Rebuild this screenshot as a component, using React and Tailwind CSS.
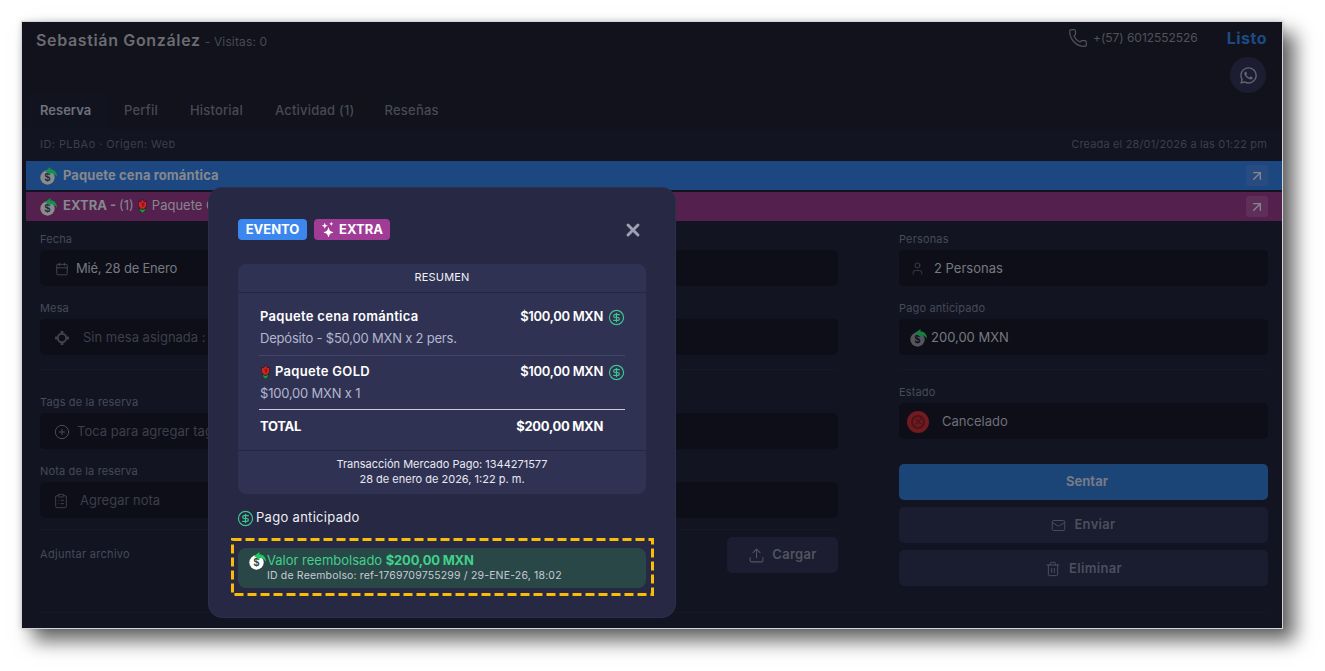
import React from 'react';
import {
  ArrowUpRight,
  Calendar,
  CircleDollarSign,
  CirclePlus,
  ClipboardList,
  Mail,
  Phone,
  Trash2,
  Upload,
  User,
  X,
} from 'lucide-react';
import { FaWhatsapp } from 'react-icons/fa';
import { BsStars } from 'react-icons/bs';

const font = 'font-["Inter","Open_Sans",sans-serif]';

function RefundIcon({ coin = '#8b8b8b', mark = '#1f2a44', arrow = '#12924f', className = '' }) {
  return (
    <svg viewBox="0 0 17 18" className={`w-[17px] h-[18px] shrink-0 ${className}`}>
      <circle cx="7.5" cy="10.5" r="7.2" fill={coin} />
      <text x="7.5" y="14.2" textAnchor="middle" fontSize="10.5" fontWeight="800" fill={mark} fontFamily="Liberation Sans, sans-serif">$</text>
      <path d="M5 4 10.5 0v2.4c4 0 6.5 2.6 6.5 7.6-1.5-2.7-3.5-4-6.5-4v2z" fill={arrow} />
    </svg>
  );
}

function Rose({ className = '' }) {
  return (
    <svg viewBox="0 0 9 14" className={`w-[9px] h-[14px] shrink-0 ${className}`}>
      <path d="M1 9 4.5 10.6 8 9 6.8 12.2 4.5 14 2.2 12.2z" fill="#1f9d3a" stroke="#10131c" strokeWidth="0.5" />
      <path d="M.5 2.2 2.7 2.9 4.5 0 6.3 2.9 8.5 2.2 8.5 6.8 6.3 10H2.7L.5 6.8z" fill="#d32424" stroke="#10131c" strokeWidth="0.5" />
      <path d="M3.4 4 5.6 3.4 6.6 6 4.5 8.4z" fill="#8f1616" />
    </svg>
  );
}

function TableIcon() {
  return (
    <svg viewBox="0 0 14 14" className="w-[14px] h-[14px] shrink-0" fill="none">
      <circle cx="7" cy="7" r="4.2" stroke="#3f4250" strokeWidth="2" />
      <rect x="5.6" y="0" width="2.8" height="2" fill="#3f4250" />
      <rect x="5.6" y="12" width="2.8" height="2" fill="#3f4250" />
      <rect x="0" y="5.6" width="2" height="2.8" fill="#3f4250" />
      <rect x="12" y="5.6" width="2" height="2.8" fill="#3f4250" />
    </svg>
  );
}

function CancelIcon() {
  return (
    <div className="w-[22px] h-[22px] rounded-full bg-[#731a20] flex items-center justify-center shrink-0">
      <div className="w-[14px] h-[14px] rounded-full border-2 border-[#4a1418] flex items-center justify-center">
        <X className="w-[9px] h-[9px] text-[#4a1418]" strokeWidth={4} />
      </div>
    </div>
  );
}

function Field({ label, children, className = '' }) {
  return (
    <div className={className}>
      <div className="h-[20px] text-[11px] leading-[19px] tracking-[0.15px] text-[#464a5a]">{label}</div>
      <div className="h-[36px] pt-[1px] rounded-[5px] bg-[#0d0e17] flex items-center text-[13px]">{children}</div>
    </div>
  );
}

function Tab({ children, active, className = '' }) {
  return (
    <div
      className={`h-[36px] flex items-center rounded-t-[6px] text-[13px] ${
        active ? 'w-[83px] pl-[14px] bg-[#11141f] text-[#6e717c] font-semibold' : 'font-medium tracking-[0.2px] text-[#474a55]'
      } ${className}`}
    >
      {children}
    </div>
  );
}

function SummaryLine({ name, detail, rose }) {
  return (
    <div>
      <div className="flex items-center justify-between h-[20px]">
        <div className="flex items-center gap-[5px] text-[13px] font-semibold tracking-[0.3px] text-white">
          {rose && <Rose className="ml-[1px]" />}
          {name}
        </div>
        <div className="flex items-center gap-[5px] text-[13px] font-semibold tracking-[-0.3px] text-white">
          $100,00 MXN
          <CircleDollarSign className="w-[17px] h-[17px] text-[#3fc48f]" strokeWidth={1.7} />
        </div>
      </div>
      <div className="text-[13px] leading-[20px] tracking-[-0.2px] text-[#b3b7cf] mt-[1px]">{detail}</div>
    </div>
  );
}

function Modal() {
  return (
    <div className="absolute left-[186px] top-[165px] w-[468px] h-[431px] rounded-[14px] bg-[#272843] border border-[#2d2e4a] pt-[31px] px-[29px]">
      <div className="flex items-center h-[21px]">
        <span className="w-[69px] h-[21px] rounded-[4px] bg-[#3b87ee] text-white text-[13px] font-bold flex items-center justify-center">EVENTO</span>
        <span className="ml-[7px] w-[76px] h-[21px] gap-[3px] rounded-[4px] bg-[#a03c95] text-white text-[13px] font-bold flex items-center justify-center">
          <BsStars className="w-[15px] h-[15px]" />
          EXTRA
        </span>
        <X className="ml-auto mr-[3px] w-[20px] h-[20px] text-[#9ea1b3]" strokeWidth={3.5} />
      </div>

      <div className="mt-[24px] w-[408px] h-[230px] rounded-[8px] bg-[#303253] flex flex-col">
        <div className="h-[29px] shrink-0 pb-[1px] border-b border-[#25263f] flex items-center justify-center text-[11px] tracking-[0.2px] text-[#f1f1f6]">RESUMEN</div>
        <div className="pl-[22px] pr-[21px] pt-[14px]">
          <SummaryLine name="Paquete cena romántica" detail="Depósito - $50,00 MXN x 2 pers." />
          <div className="-ml-[1px] mt-[7px] h-px bg-[#43456a]" />
          <div className="mt-[6px] -mb-[1px]">
            <SummaryLine rose name="Paquete GOLD" detail="$100,00 MXN x 1" />
          </div>
          <div className="-ml-[1px] mt-[7px] h-px bg-[#c9cbdc]" />
          <div className="flex justify-between pr-[22px] pt-[1px] h-[32px] items-center text-[13px] font-bold tracking-[-0.3px] text-white">
            <span>TOTAL</span>
            <span>$200,00 MXN</span>
          </div>
        </div>
        <div className="mt-[8px] flex-1 pb-[2px] border-t border-[#25263f] flex flex-col items-center justify-center text-[11px] leading-[15px] text-[#e8e9f2]">
          <div>Transacción Mercado Pago: 1344271577</div>
          <div>28 de enero de 2026, 1:22 p. m.</div>
        </div>
      </div>

      <div className="mt-[14px] flex items-center gap-[2px] text-[13px] tracking-[0.3px] text-[#eeeef5] h-[20px]">
        <CircleDollarSign className="-ml-[1px] w-[17px] h-[17px] text-[#3fc48f]" strokeWidth={1.7} />
        Pago anticipado
      </div>

      <div className="relative -ml-[7px] mt-[10px] w-[423px] h-[58px] pl-[7px] pr-[8px] pt-[10px]">
        <div className="h-[40px] rounded-[8px] bg-[#2a4747] flex items-center pl-[11px] gap-[1px]">
          <RefundIcon coin="#ffffff" mark="#2a4747" arrow="#22c55e" className="self-start mt-[4px]" />
          <div>
            <div className="text-[13px] leading-[15px] text-[#3fd08c]">
              Valor reembolsado <span className="font-bold tracking-[-0.2px]">$200,00 MXN</span>
            </div>
            <div className="text-[10.5px] leading-[16px] tracking-[0.17px] text-[#c3cdd3]">ID de Reembolso: ref-1769709755299 / 29-ENE-26, 18:02</div>
          </div>
        </div>
        <svg className="absolute inset-0 w-full h-full" viewBox="0 0 423 58" fill="none">
          <rect x="1.5" y="1.5" width="420" height="55" stroke="#fbbc05" strokeWidth="3" strokeDasharray="9 4" />
        </svg>
      </div>
    </div>
  );
}

export default function App() {
  return (
    <div className={`min-h-screen bg-white pt-[21px] pl-[21px] ${font}`}>
      <div className="relative w-[1262px] h-[608px] border border-[#d4d4d4] bg-[#11121b] shadow-[12px_12px_18px_rgba(0,0,0,0.6),0_0_6px_rgba(0,0,0,0.15)] flex flex-col">
        <div className="h-[71px] shrink-0 flex justify-between pl-[14px] pr-[15px]">
          <div className="pt-[6px] flex items-baseline gap-[4px]">
            <span className="text-[16px] font-semibold tracking-[0.65px] text-[#6b6c72]">Sebastián González</span>
            <span className="text-[12px] tracking-[0.15px] text-[#474a55]">- Visitas: 0</span>
          </div>
          <div className="flex flex-col items-end pt-[4px]">
            <div className="flex items-center">
              <Phone className="w-[20px] h-[20px] text-[#50525c]" strokeWidth={1.5} />
              <span className="ml-[5px] text-[12px] tracking-[-0.05px] text-[#50525c]">+(57) 6012552526</span>
              <span className="ml-[29px] text-[16px] font-bold tracking-[0.5px] text-[#1d4a85]">Listo</span>
            </div>
            <div className="mt-[7px] mr-[1px] w-[36px] h-[36px] rounded-full bg-[#1c1d30] flex items-center justify-center">
              <FaWhatsapp className="w-[19px] h-[19px] text-[#62646f]" />
            </div>
          </div>
        </div>

        <div className="h-[36px] shrink-0 flex items-center pl-[4px]">
          <Tab active>Reserva</Tab>
          <div className="flex gap-[32px] ml-[15px]">
            <Tab>Perfil</Tab>
            <Tab>Historial</Tab>
            <Tab>Actividad (1)</Tab>
            <Tab className="-ml-[2px]">Reseñas</Tab>
          </div>
        </div>

        <div className="flex-1 bg-[#121421] flex flex-col">
          <div className="h-[32px] shrink-0 pb-[2px] flex items-center justify-between pl-[18px] pr-[15px] text-[11px] text-[#3c3f4d]">
            <span className="tracking-[0.43px]">ID: PLBAo · Origen: Web</span>
            <span className="tracking-[0.15px]">Creada el 28/01/2026 a las 01:22 pm</span>
          </div>

          <div className="ml-[4px] h-[29px] shrink-0 bg-[#1c4780] flex items-center pl-[14px] pr-[14px] gap-[6px]">
            <RefundIcon />
            <span className="text-[13px] font-bold tracking-[0.1px] text-[#85888f]">Paquete cena romántica</span>
            <span className="ml-auto w-[22px] h-[21px] rounded-[3px] bg-[#284c80] flex items-center justify-center">
              <ArrowUpRight className="w-[16px] h-[16px] text-[#85888f]" strokeWidth={2} />
            </span>
          </div>
          <div className="mt-[2px] ml-[4px] h-[29px] shrink-0 bg-[#54204d] flex items-center pl-[14px] pr-[14px] gap-[6px]">
            <RefundIcon />
            <span className="pb-[1px] text-[13px] text-[#85888f] flex items-center gap-[3px]">
              <b className="font-bold">EXTRA -</b> (1)
              <Rose className="ml-[1px] mr-[2px]" />
              Paquete GOLD
            </span>
            <span className="ml-auto w-[22px] h-[21px] rounded-[3px] bg-[#5f2f59] flex items-center justify-center">
              <ArrowUpRight className="w-[16px] h-[16px] text-[#85888f]" strokeWidth={2} />
            </span>
          </div>

          <div className="flex pl-[18px] pt-[9px]">
            <div className="w-[798px] shrink-0">
              <div className="flex gap-[20px]">
                <Field label="Fecha" className="flex-1">
                  <Calendar className="ml-[15px] w-[14px] h-[14px] text-[#4a4c58]" strokeWidth={1.5} />
                  <span className="ml-[7px] tracking-[-0.2px] text-[#777982]">Mié, 28 de Enero</span>
                </Field>
                <Field label="Hora" className="flex-1" />
              </div>
              <div className="mt-[13px] flex gap-[20px]">
                <Field label="Mesa" className="flex-1">
                  <span className="ml-[15px]"><TableIcon /></span>
                  <span className="ml-[14px] text-[#3c3f4c]">Sin mesa asignada :</span>
                </Field>
                <Field label="Zona" className="flex-1" />
              </div>
              <div className="mt-[14px] h-px bg-[#161826]" />
              <Field label="Tags de la reserva" className="mt-[23px]">
                <CirclePlus className="ml-[14px] w-[16px] h-[16px] text-[#4a4c58]" strokeWidth={1.5} />
                <span className="ml-[7px] text-[#3c3f4c]">Toca para agregar tags</span>
              </Field>
              <Field label="Nota de la reserva" className="mt-[13px]">
                <ClipboardList className="ml-[13px] w-[16px] h-[16px] text-[#3c3f4c]" strokeWidth={1.5} />
                <span className="ml-[11px] text-[#3c3f4c]">Agregar nota</span>
              </Field>
              <div className="mt-[11px] h-px bg-[#161826]" />
              <div className="mt-[7px] flex items-start justify-between">
                <span className="mt-[8px] text-[11px] leading-[18px] tracking-[0.3px] text-[#464a5a]">Adjuntar archivo</span>
                <div className="w-[111px] h-[36px] rounded-[5px] bg-[#1c1d30] flex items-center justify-center gap-[7px] text-[13px] font-semibold tracking-[0.3px] text-[#52545f]">
                  <Upload className="w-[17px] h-[17px]" strokeWidth={1.5} />
                  Cargar
                </div>
              </div>
            </div>

            <div className="ml-[61px] w-[369px] shrink-0">
              <Field label="Personas">
                <User className="ml-[11px] w-[15px] h-[15px] text-[#3c3f4c]" strokeWidth={1.5} />
                <span className="ml-[9px] text-[#777982]">2 Personas</span>
              </Field>
              <Field label="Pago anticipado" className="mt-[13px]">
                <span className="ml-[11px]"><RefundIcon coin="#54565f" mark="#0d0e17" arrow="#15803d" /></span>
                <span className="ml-[4px] text-[#777982]">200,00 MXN</span>
              </Field>
              <div className="mt-[14px] h-px bg-[#161826]" />
              <Field label="Estado" className="mt-[13px]">
                <span className="ml-[8px]"><CancelIcon /></span>
                <span className="ml-[13px] text-[#6d6f78]">Cancelado</span>
              </Field>
              <div className="mt-[25px] h-[36px] pl-[7px] rounded-[5px] bg-[#1b4577] flex items-center justify-center text-[13px] font-bold text-[#757a86]">Sentar</div>
              <div className="mt-[7px] h-[36px] rounded-[5px] bg-[#1a1c2f] flex items-center justify-center gap-[8px] text-[13px] font-semibold tracking-[0.3px] text-[#4c4f5c]">
                <Mail className="w-[15px] h-[15px]" strokeWidth={1.5} />
                Enviar
              </div>
              <div className="mt-[7px] h-[36px] pt-[1px] rounded-[5px] bg-[#1a1c2f] flex items-center justify-center gap-[8px] text-[13px] font-semibold tracking-[0.3px] text-[#4c4f5c]">
                <Trash2 className="w-[16px] h-[16px]" strokeWidth={1.5} />
                Eliminar
              </div>
            </div>
          </div>
          <div className="mt-[26px] ml-[18px] mr-[14px] h-px bg-[#161826]" />
        </div>

        <Modal />
      </div>
    </div>
  );
}
